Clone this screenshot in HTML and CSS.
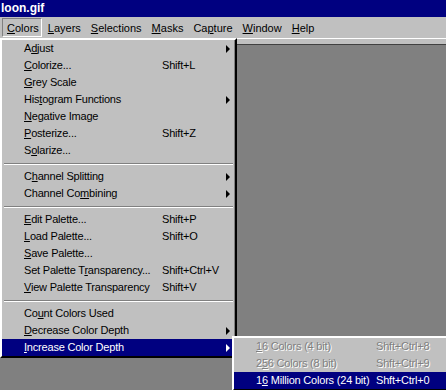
FILE: index.html
```html
<!DOCTYPE html>
<html lang="en">
<head>
    <meta charset="UTF-8">
    <title>loon.gif</title>
    <link rel="stylesheet" href="styles.css">
</head>
<body>
    <div class="window">
        <div class="titlebar">loon.gif</div>

        <div class="menubar">
            <span class="menu-item pressed"><u>C</u>olors</span>
            <span class="menu-item"><u>L</u>ayers</span>
            <span class="menu-item"><u>S</u>elections</span>
            <span class="menu-item"><u>M</u>asks</span>
            <span class="menu-item">Ca<u>p</u>ture</span>
            <span class="menu-item"><u>W</u>indow</span>
            <span class="menu-item"><u>H</u>elp</span>
        </div>

        <div class="frame"></div>
        <div class="workspace"></div>

        <!-- Colors dropdown -->
        <div class="dropdown">
            <div class="item"><span>A<u>d</u>just</span><span></span><span class="arrow"></span></div>
            <div class="item"><span><u>C</u>olorize...</span><span>Shift+L</span><span></span></div>
            <div class="item"><span><u>G</u>rey Scale</span><span></span><span></span></div>
            <div class="item"><span>His<u>t</u>ogram Functions</span><span></span><span class="arrow"></span></div>
            <div class="item"><span><u>N</u>egative Image</span><span></span><span></span></div>
            <div class="item"><span><u>P</u>osterize...</span><span>Shift+Z</span><span></span></div>
            <div class="item"><span>S<u>o</u>larize...</span><span></span><span></span></div>
            <div class="sep"></div>
            <div class="item"><span>C<u>h</u>annel Splitting</span><span></span><span class="arrow"></span></div>
            <div class="item"><span>Channel Co<u>m</u>bining</span><span></span><span class="arrow"></span></div>
            <div class="sep"></div>
            <div class="item"><span><u>E</u>dit Palette...</span><span>Shift+P</span><span></span></div>
            <div class="item"><span><u>L</u>oad Palette...</span><span>Shift+O</span><span></span></div>
            <div class="item"><span><u>S</u>ave Palette...</span><span></span><span></span></div>
            <div class="item"><span>Set Palette T<u>r</u>ansparency...</span><span>Shift+Ctrl+V</span><span></span></div>
            <div class="item"><span><u>V</u>iew Palette Transparency</span><span>Shift+V</span><span></span></div>
            <div class="sep"></div>
            <div class="item"><span>Co<u>u</u>nt Colors Used</span><span></span><span></span></div>
            <div class="item"><span><u>D</u>ecrease Color Depth</span><span></span><span class="arrow"></span></div>
            <div class="item active"><span><u>I</u>ncrease Color Depth</span><span></span><span class="arrow"></span></div>
        </div>

        <!-- Increase Color Depth submenu -->
        <div class="submenu">
            <div class="item disabled"><span><u>1</u>6 Colors (4 bit)</span><span>Shft+Ctrl+8</span></div>
            <div class="item disabled"><span>2<u>5</u>6 Colors (8 bit)</span><span>Shft+Ctrl+9</span></div>
            <div class="item active"><span>1<u>6</u> Million Colors (24 bit)</span><span>Shft+Ctrl+0</span></div>
        </div>
    </div>
</body>
</html>
```

FILE: styles.css
```css
body {
    margin: 0;
    font-family: "Liberation Sans", Arial, sans-serif;
    font-size: 11px;
    color: #000;
    background: #808080;
}

.window {
    position: relative;
    width: 446px;
    height: 390px;
    overflow: hidden;
    background: #808080;
}

.titlebar {
    height: 17px;
    line-height: 16px;
    padding-left: 1px;
    background: #000080;
    color: #fff;
    font-size: 12px;
    font-weight: bold;
}

.menubar {
    display: flex;
    height: 21px;
    padding-left: 2px;
    background: #c0c0c0;
}

.menu-item {
    padding: 0 4px;
    line-height: 21px;
    border: 1px solid transparent;
}

.menu-item.pressed {
    line-height: 18px;
    padding: 0 2px 0 4px;
    margin: 1px 1px 1px 0;
    border-color: #808080 #fff #fff #808080;
}

.frame {
    height: 5px;
    background: #c0c0c0;
    border-top: 1px solid #fff;
    border-bottom: 1px solid #404040;
}

.workspace {
    height: 345px;
    background: #808080;
}

/* menus */
.dropdown,
.submenu {
    position: absolute;
    background: #c0c0c0;
    border-style: solid;
    border-width: 2px;
    border-color: #fff #000 #000 #fff;
    box-shadow: inset -1px -1px 0 #808080;
    letter-spacing: -0.2px;
}

.dropdown {
    left: 0;
    top: 38px;
    width: 233px;
}

.submenu {
    left: 232px;
    top: 336px;
    width: 220px;
}

.item {
    display: grid;
    height: 17px;
    line-height: 17px;
    padding-left: 22px;
    white-space: nowrap;
}

.dropdown .item {
    grid-template-columns: 138px 64px 4px;
}

.submenu .item {
    grid-template-columns: 120px auto;
}

.item.active {
    background: #000080;
    color: #fff;
}

.item.disabled {
    color: #808080;
    text-shadow: 1px 1px 0 #fff;
}

.arrow {
    align-self: center;
    width: 0;
    height: 0;
    border-left: 4px solid #000;
    border-top: 4px solid transparent;
    border-bottom: 4px solid transparent;
}

.item.active .arrow {
    border-left-color: #fff;
}

.sep {
    height: 1px;
    margin: 4px 2px 3px;
    border-top: 1px solid #808080;
    background: #fff;
}
```
